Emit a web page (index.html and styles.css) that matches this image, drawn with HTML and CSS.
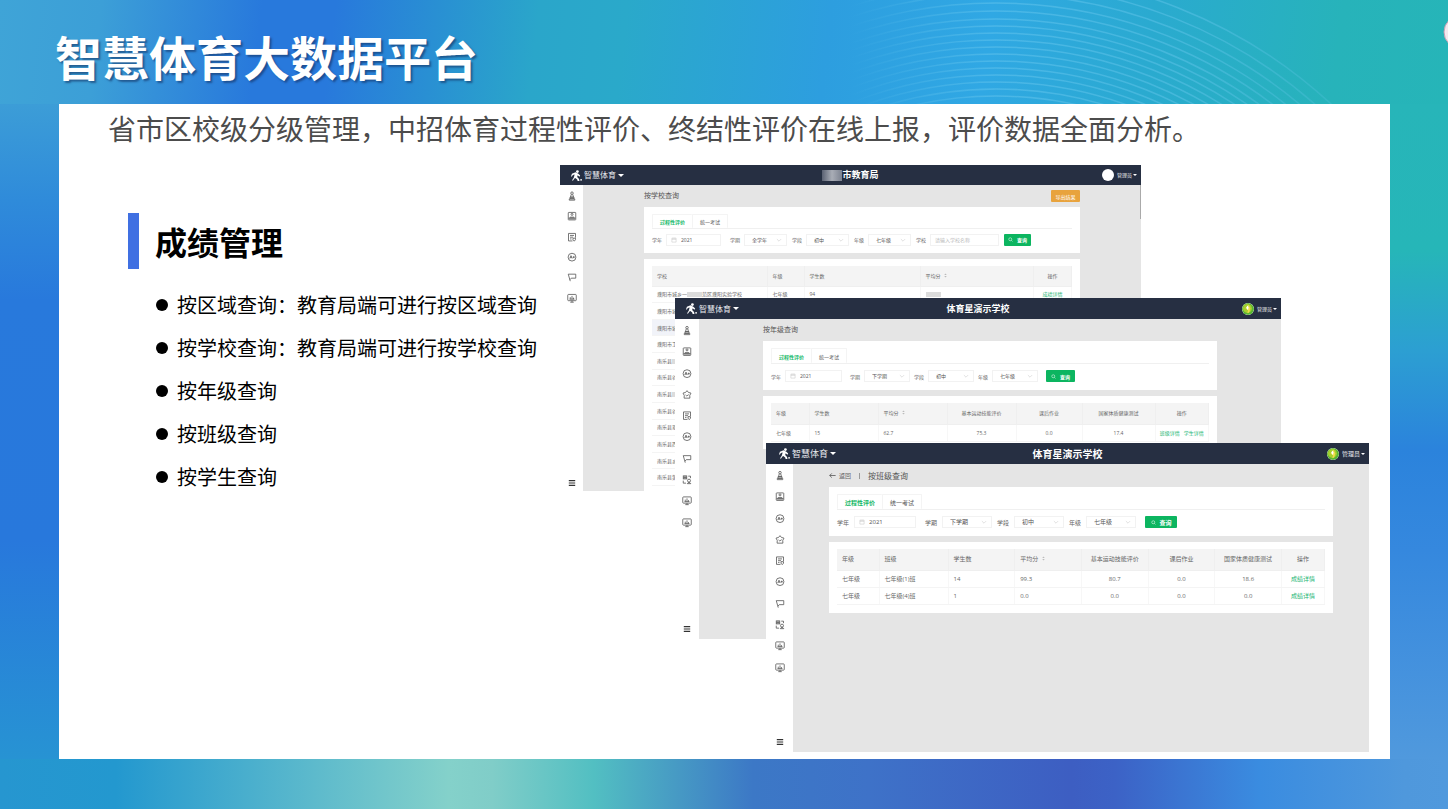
FILE: index.html
```html
<!DOCTYPE html>
<html lang="zh-CN">
<head>
<meta charset="utf-8">
<title>智慧体育大数据平台</title>
<link rel="stylesheet" href="styles.css">
</head>
<body>
<svg class="sprite" aria-hidden="true">
  <symbol id="runner" viewBox="0 0 24 24"><circle cx="14" cy="3.500" r="3"/><path d="M2 8l8-3 6 3 4 4-1.500 2.500-4-3-1 4 4 4 1 4.500h-4l-1-3.500-4-3-2 1-3 4.500H2l4-6 2-7-4 1-2 3H0z"/><circle cx="22" cy="21.500" r="2"/></symbol>
  <symbol id="pawn" viewBox="0 0 20 20"><circle cx="10" cy="4" r="2.500"/><path d="M8.500 6.500L7 12h6l-1.500-5.500M6 12h8v3H6zM4.500 15.500h11V18h-11z"/></symbol>
  <symbol id="roster" viewBox="0 0 20 20"><rect x="2.500" y="2.500" width="15" height="15" rx="1"/><circle cx="10" cy="6.500" r="2"/><path d="M6 17v-5h8v5M10 12v5M3 14h14"/></symbol>
  <symbol id="note" viewBox="0 0 20 20"><path d="M17 11V2.500H3v15h8M6 6.500h8M6 10h6M6 13.500h3M12 12h5v3l-2.500 3-2.500-3z"/></symbol>
  <symbol id="grade" viewBox="0 0 20 20"><circle cx="10" cy="10" r="7.800"/><path d="M5.500 12.500L8 7l2.500 5.500M6.500 11h3M11.500 10h4M13.500 8v4"/></symbol>
  <symbol id="star" viewBox="0 0 20 20"><path d="M10 2l2.800 3.500 5.200 1.500-2.500 4.500.3 5.500H4.200l.3-5.500L2 7l5.200-1.500zM7 10.500l2.500 2 4-2.500"/></symbol>
  <symbol id="flag" viewBox="0 0 20 20"><path d="M6.500 18L2.500 4h15v8H8.500l-2.500 3"/></symbol>
  <symbol id="swap" viewBox="0 0 20 20"><rect x="2.500" y="2.500" width="7" height="6"/><path d="M2.500 5.500h7M6 2.500v6M12.500 3H17v4M2.500 12v5H8"/><circle cx="14" cy="12" r="3"/><path d="M10.500 18c1-3 6-3 7 0z"/></symbol>
  <symbol id="board" viewBox="0 0 20 20"><rect x="1.500" y="2.500" width="17" height="12.500" rx="1.500"/><path d="M6.500 12V8M10 12V5.500M13 12V9M5 12h10M10 15v3M6.500 18h7"/></symbol>
  <symbol id="menu" viewBox="0 0 20 20"><path d="M2 4h16M2 10h16M2 16h16"/></symbol>
  <symbol id="cal" viewBox="0 0 20 20"><path d="M3 4h14v13H3zM3 8h14M7 2v4M13 2v4"/></symbol>
  <symbol id="down" viewBox="0 0 20 20"><path d="M3 7l7 7 7-7"/></symbol>
  <symbol id="search" viewBox="0 0 20 20"><circle cx="9" cy="9" r="6"/><path d="M13.500 13.500L18 18"/></symbol>
  <symbol id="back" viewBox="0 0 20 20"><path d="M19 10H2M8 4l-6 6 6 6"/></symbol>
  <symbol id="sort" viewBox="0 0 12 20"><path d="M6 2l5 6H1zM6 18l5-6H1z"/></symbol>
  <symbol id="leaf" viewBox="0 0 20 20"><circle cx="10" cy="10" r="10" fill="#58b531"/><circle cx="9" cy="9" r="7.500" fill="#a5cf2e"/><path d="M11 3l3 6-2 7-3 1 1-5-4-3z" fill="#f0dc4a"/><path d="M9 4l2 3-1 5-3-4z" fill="#fff"/></symbol>
</svg>

<svg class="backdrop" viewBox="0 0 1448 809" preserveAspectRatio="none" aria-hidden="true">
  <defs>
    <clipPath id="topband"><rect width="1448" height="104"/></clipPath>
    <linearGradient id="fade" gradientUnits="userSpaceOnUse" x1="850" y1="0" x2="1330" y2="0">
      <stop offset="0" stop-color="#6cc9ee" stop-opacity="0"/><stop offset=".3" stop-color="#6cc9ee" stop-opacity=".45"/><stop offset=".7" stop-color="#6cc9ee" stop-opacity=".4"/><stop offset="1" stop-color="#6cc9ee" stop-opacity=".2"/>
    </linearGradient>
  </defs>
  <g fill="none" stroke="url(#fade)" stroke-width="1.500" clip-path="url(#topband)">
    <circle cx="996" cy="467" r="494"/><circle cx="996" cy="467" r="483"/><circle cx="996" cy="467" r="473"/>
    <circle cx="996" cy="467" r="464"/><circle cx="996" cy="467" r="456"/><circle cx="996" cy="467" r="448"/>
    <circle cx="996" cy="467" r="441"/><circle cx="996" cy="467" r="434"/><circle cx="996" cy="467" r="427"/>
    <circle cx="996" cy="467" r="420"/><circle cx="996" cy="467" r="413"/><circle cx="996" cy="467" r="406"/>
    <circle cx="996" cy="467" r="399"/><circle cx="996" cy="467" r="392"/><circle cx="996" cy="467" r="385"/>
    <circle cx="996" cy="467" r="378"/><circle cx="996" cy="467" r="371"/>
  </g>
  <circle cx="1460" cy="32" r="16" fill="#f3e9ee" stroke="#c9a0b4"/>
</svg>

<div class="slide">
  <h1>智慧体育大数据平台</h1>
  <main class="panel">
    <p class="lead">省市区校级分级管理，中招体育过程性评价、终结性评价在线上报，评价数据全面分析。</p>
    <div class="columns">
      <section class="summary">
        <h2>成绩管理</h2>
        <ul>
          <li>按区域查询：教育局端可进行按区域查询</li>
          <li>按学校查询：教育局端可进行按学校查询</li>
          <li>按年级查询</li>
          <li>按班级查询</li>
          <li>按学生查询</li>
        </ul>
      </section>

      <div class="desktop">
        <article class="win win-school">
          <header class="bar">
            <span class="brand"><svg class="logo"><use href="#runner"/></svg>智慧体育<i class="caret"></i></span>
            <strong><span class="mosaic"></span>市教育局</strong>
            <span class="user"><span class="avatar"></span>管理员<i class="caret"></i></span>
          </header>
          <nav class="side">
            <div class="icons"><svg><use href="#pawn"/></svg><svg><use href="#roster"/></svg><svg><use href="#note"/></svg><svg><use href="#grade"/></svg><svg><use href="#flag"/></svg><svg><use href="#board"/></svg></div>
            <svg class="fold"><use href="#menu"/></svg>
          </nav>
          <div class="content">
            <div class="crumb"><h3>按学校查询</h3><button class="export" type="button">导出结果</button></div>
            <section class="card">
              <div class="tabs"><button class="on" type="button">过程性评价</button><button type="button">统一考试</button></div>
              <form class="filters">
                <label class="field year">学年<span class="box"><svg><use href="#cal"/></svg><input value="2021"></span></label>
                <label class="field">学期<span class="box pick"><select><option>全学年</option></select><svg><use href="#down"/></svg></span></label>
                <label class="field">学段<span class="box pick"><select><option>初中</option></select><svg><use href="#down"/></svg></span></label>
                <label class="field">年级<span class="box pick"><select><option>七年级</option></select><svg><use href="#down"/></svg></span></label>
                <label class="field name">学校<span class="box"><input placeholder="请输入学校名称"></span></label>
                <button class="query" type="button"><svg><use href="#search"/></svg>查询</button>
              </form>
            </section>
            <section class="card results">
              <table>
                <thead><tr><th>学校</th><th>年级</th><th>学生数</th><th>平均分 <svg class="sort"><use href="#sort"/></svg></th><th class="mid">操作</th></tr></thead>
                <tbody>
                  <tr><td>濮阳市城乡一<span class="smear"></span>范区濮阳实验学校</td><td>七年级</td><td>94</td><td><span class="smear"></span></td><td class="mid"><a href="#">成绩详情</a></td></tr>
                  <tr><td>濮阳市城</td><td></td><td></td><td></td><td></td></tr>
                  <tr class="hover"><td>濮阳市城</td><td></td><td></td><td></td><td></td></tr>
                  <tr><td>濮阳市卫</td><td></td><td></td><td></td><td></td></tr>
                  <tr><td>南乐县<span class="smear"></span></td><td></td><td></td><td></td><td></td></tr>
                  <tr><td>南乐县谷</td><td></td><td></td><td></td><td></td></tr>
                  <tr><td>南乐县<span class="smear"></span></td><td></td><td></td><td></td><td></td></tr>
                  <tr><td>南乐县谷</td><td></td><td></td><td></td><td></td></tr>
                  <tr><td>南乐县翠</td><td></td><td></td><td></td><td></td></tr>
                  <tr><td>南乐县西</td><td></td><td></td><td></td><td></td></tr>
                  <tr><td>南乐县乡</td><td></td><td></td><td></td><td></td></tr>
                  <tr><td>南乐县第</td><td></td><td></td><td></td><td></td></tr>
                </tbody>
              </table>
            </section>
          </div>
          <span class="scroll"></span>
        </article>

        <article class="win win-year">
          <header class="bar">
            <span class="brand"><svg class="logo"><use href="#runner"/></svg>智慧体育<i class="caret"></i></span>
            <strong>体育星演示学校</strong>
            <span class="user"><svg class="avatar"><use href="#leaf"/></svg>管理员<i class="caret"></i></span>
          </header>
          <nav class="side">
            <div class="icons"><svg><use href="#pawn"/></svg><svg><use href="#roster"/></svg><svg><use href="#grade"/></svg><svg><use href="#star"/></svg><svg><use href="#note"/></svg><svg><use href="#grade"/></svg><svg><use href="#flag"/></svg><svg><use href="#swap"/></svg><svg><use href="#board"/></svg><svg><use href="#board"/></svg></div>
            <svg class="fold"><use href="#menu"/></svg>
          </nav>
          <div class="content">
            <div class="crumb"><h3>按年级查询</h3></div>
            <section class="card">
              <div class="tabs"><button class="on" type="button">过程性评价</button><button type="button">统一考试</button></div>
              <form class="filters">
                <label class="field year">学年<span class="box"><svg><use href="#cal"/></svg><input value="2021"></span></label>
                <label class="field">学期<span class="box pick"><select><option>下学期</option></select><svg><use href="#down"/></svg></span></label>
                <label class="field">学段<span class="box pick"><select><option>初中</option></select><svg><use href="#down"/></svg></span></label>
                <label class="field">年级<span class="box pick"><select><option>七年级</option></select><svg><use href="#down"/></svg></span></label>
                <button class="query" type="button"><svg><use href="#search"/></svg>查询</button>
              </form>
            </section>
            <section class="card results">
              <table>
                <thead><tr><th>年级</th><th>学生数</th><th>平均分 <svg class="sort"><use href="#sort"/></svg></th><th class="mid">基本运动技能评价</th><th class="mid">课后作业</th><th class="mid">国家体质健康测试</th><th class="mid">操作</th></tr></thead>
                <tbody>
                  <tr><td>七年级</td><td>15</td><td>62.7</td><td class="mid">75.3</td><td class="mid">0.0</td><td class="mid">17.4</td><td class="mid links"><a href="#">班级详情</a><a href="#">学生详情</a></td></tr>
                </tbody>
              </table>
            </section>
          </div>
        </article>

        <article class="win win-class">
          <header class="bar">
            <span class="brand"><svg class="logo"><use href="#runner"/></svg>智慧体育<i class="caret"></i></span>
            <strong>体育星演示学校</strong>
            <span class="user"><svg class="avatar"><use href="#leaf"/></svg>管理员<i class="caret"></i></span>
          </header>
          <nav class="side">
            <div class="icons"><svg><use href="#pawn"/></svg><svg><use href="#roster"/></svg><svg><use href="#grade"/></svg><svg><use href="#star"/></svg><svg><use href="#note"/></svg><svg><use href="#grade"/></svg><svg><use href="#flag"/></svg><svg><use href="#swap"/></svg><svg><use href="#board"/></svg><svg><use href="#board"/></svg></div>
            <svg class="fold"><use href="#menu"/></svg>
          </nav>
          <div class="content">
            <div class="crumb"><a class="back" href="#"><svg><use href="#back"/></svg>返回</a><span class="rule"></span><h3>按班级查询</h3></div>
            <section class="card">
              <div class="tabs"><button class="on" type="button">过程性评价</button><button type="button">统一考试</button></div>
              <form class="filters">
                <label class="field year">学年<span class="box"><svg><use href="#cal"/></svg><input value="2021"></span></label>
                <label class="field">学期<span class="box pick"><select><option>下学期</option></select><svg><use href="#down"/></svg></span></label>
                <label class="field">学段<span class="box pick"><select><option>初中</option></select><svg><use href="#down"/></svg></span></label>
                <label class="field">年级<span class="box pick"><select><option>七年级</option></select><svg><use href="#down"/></svg></span></label>
                <button class="query" type="button"><svg><use href="#search"/></svg>查询</button>
              </form>
            </section>
            <section class="card results">
              <table>
                <thead><tr><th>年级</th><th>班级</th><th>学生数</th><th>平均分 <svg class="sort"><use href="#sort"/></svg></th><th class="mid">基本运动技能评价</th><th class="mid">课后作业</th><th class="mid">国家体质健康测试</th><th class="mid">操作</th></tr></thead>
                <tbody>
                  <tr><td>七年级</td><td>七年级(1)班</td><td>14</td><td>99.3</td><td class="mid">80.7</td><td class="mid">0.0</td><td class="mid">18.6</td><td class="mid"><a href="#">成绩详情</a></td></tr>
                  <tr><td>七年级</td><td>七年级(4)班</td><td>1</td><td>0.0</td><td class="mid">0.0</td><td class="mid">0.0</td><td class="mid">0.0</td><td class="mid"><a href="#">成绩详情</a></td></tr>
                </tbody>
              </table>
            </section>
          </div>
        </article>
      </div>
    </div>
  </main>
</div>
</body>
</html>
```
FILE: styles.css
```css
* { box-sizing: border-box; }

body {
  margin: 0;
  min-height: 100vh;
  font-family: "Noto Sans CJK SC", sans-serif;
  color: #000;
  background:
    linear-gradient(90deg, #2696d0 0, #2398cf 8%, #84d1ca 31%, #80cdc8 34%, #52bfc2 41%, #3c78c6 52%, #3e72c8 60%, #3d5ec2 74%, #3c62c6 77%, #3a8ce0 87%, #4f98dc 97%, #5099dd 100%) 0 100% / 100% 50px no-repeat,
    linear-gradient(97deg, #3fa4d7 0, #3c9fd7 7%, #2879dc 18%, #2879dc 23%, #2aa6ca 37%, #2aa9ca 43%, #2d9edf 57%, #30a8e4 68%, #2aaad0 79%, #27b3ba 92%, #26b5b8 100%) 0 0 / 100% 104px no-repeat,
    linear-gradient(180deg, #3c9dd7 104px, #2f8bda 200px, #2879dc 300px, #2878dc 540px, #2793d3 759px) 0 0 / 59px 100% no-repeat,
    linear-gradient(180deg, #27b5b9 104px, #26b6b8 250px, #2c9fd2 350px, #2b83dc 450px, #3588de 550px, #5099dd 759px) 100% 0 / 58px 100% no-repeat,
    #287adc;
}

.sprite { position: absolute; width: 0; height: 0; }
.backdrop { position: absolute; inset: 0; width: 100%; height: 100%; }

.slide {
  position: relative;
  display: flex;
  flex-direction: column;
  min-height: 100vh;
  padding: 21px 58px 50px 59px;
}
h1 {
  margin: 0 0 13px;
  text-indent: -4px;
  font-size: 47px;
  line-height: 70px;
  color: #fff;
  text-shadow: 2px 2px 2px rgba(20, 50, 100, .6);
}
.panel {
  flex: 1;
  display: flex;
  flex-direction: column;
  padding: 3px 21px 7px 49px;
  background: #fff;
}
.lead { margin: 0 0 16px; font-size: 28px; line-height: 42px; color: #4c4c4c; }
.columns { flex: 1; display: flex; }
.summary { width: 452px; padding: 48px 0 0 20px; flex: none; }
h2 {
  margin: 0 0 24px;
  padding-left: 16px;
  border-left: 11px solid #4070e2;
  font-size: 32px;
  line-height: 56px;
}
ul {
  margin: 0;
  padding: 0 0 0 28px;
  list-style: none;
  display: grid;
  gap: 19px;
}
li { display: flex; align-items: center; gap: 9px; font-size: 20px; line-height: 24px; white-space: nowrap; }
li::before { content: ""; width: 12px; height: 12px; border-radius: 50%; background: #000; }

/* Overlapping windows */
.desktop { position: relative; flex: 1; min-height: 587px; }
.win {
  position: absolute;
  display: grid;
  grid-template-rows: var(--bar) 1fr;
  grid-template-columns: var(--side) 1fr;
  overflow: hidden;
  background: #e5e5e5;
  font-family: "Open Sans", "Noto Sans CJK SC", sans-serif;
  font-size: var(--fs);
  color: #666;
}
.win-school {
  left: 0; top: 0; width: 581px; height: 326px;
  --bar: 20px; --side: 23px; --fs: 5px; --brand: 8px; --title: 9px; --head: 7px;
  --gutter: 61px; --icons: 122px; --tabs: 15px; --year: 55px; --pick: 43px; --gap: 4px; --btn: 27px;
}
.win-year {
  left: 115px; top: 133px; width: 606px; height: 341px;
  --bar: 21px; --side: 24px; --fs: 5px; --brand: 8px; --title: 9px; --head: 7px;
  --gutter: 64px; --icons: 213px; --tabs: 16px; --year: 57px; --pick: 46px; --gap: 4px; --btn: 29px;
}
.win-class {
  left: 206px; top: 278px; width: 603px; height: 309px;
  --bar: 21px; --side: 27px; --fs: 6px; --brand: 9px; --title: 10px; --head: 8px;
  --gutter: 36px; --icons: 213px; --tabs: 16px; --year: 62px; --pick: 50px; --gap: 5px; --btn: 32px;
}
.bar {
  grid-column: 1 / -1;
  display: grid;
  grid-template-columns: 1fr auto 1fr;
  align-items: center;
  background: #262f42;
  color: #e8eaee;
}
.bar strong { display: flex; align-items: center; font-size: var(--title); color: #fff; line-height: 12px; }
.brand, .user { display: flex; align-items: center; font-size: var(--brand); line-height: 12px; }
.brand { gap: 2px; padding-left: 11px; }
.win-class .brand { padding-left: 13px; }
.user { justify-content: flex-end; gap: 3px; padding-right: 4px; font-size: var(--fs); }
.logo { width: 11px; height: 11px; fill: #fff; }
.caret { border: 3px solid transparent; border-top-color: #fff; border-bottom: 0; }
.user .caret { border-width: 2px; border-bottom: 0; margin-left: -2px; }
.avatar { width: 12px; height: 12px; border-radius: 50%; background: #fff; }
.mosaic { width: 20px; height: 11px; background: linear-gradient(90deg, #5a6172, #a9adb6 50%, #7c8290); }

.side { display: flex; flex-direction: column; align-items: center; padding-top: 1px; background: #fff; }
.icons { display: grid; grid-auto-rows: 1fr; height: var(--icons); }
.side svg { width: 10px; height: 100%; fill: none; stroke: #555; stroke-width: 1.6; }
.side .fold { width: 8px; height: 20px; margin-top: auto; stroke: #333; stroke-width: 3; }

.content { display: flex; flex-direction: column; min-width: 0; padding: 0 var(--gutter); gap: 6px; }
.crumb { display: flex; align-items: center; height: 22px; flex: none; margin-bottom: -6px; }
h3 { margin: 0; font-size: var(--head); font-weight: 400; color: #555; line-height: 12px; }
.win-class .crumb { height: 23px; }
.back { display: flex; align-items: center; gap: 3px; color: #666; text-decoration: none; }
.back svg { width: 7px; height: 7px; fill: none; stroke: #444; stroke-width: 2; }
.rule { width: 1px; height: 6px; margin: 0 8px; background: #999; }
button { border: 0; padding: 0; font: inherit; border-radius: 1px; }
.export { margin-left: auto; width: 29px; height: 12px; background: #e8a33d; color: #fff; }

.card { padding: 7px 8px; background: #fff; }
.tabs { display: flex; height: var(--tabs); border-bottom: 1px solid #f0f0f0; }
.tabs button { padding: 0 7px; border: 1px solid #f4f4f4; border-bottom: 0; background: #fff; color: #555; }
.tabs .on { color: #14b866; font-weight: 700; border-right: 0; }
.filters { display: flex; align-items: center; height: 12px; margin: 6px 0 1px; gap: var(--gap); }
.win-school .filters { height: 11px; margin: 5px 0 1px; gap: 5px; }
.field { display: flex; align-items: center; gap: var(--gap); white-space: nowrap; }
.box { position: relative; display: flex; align-items: center; gap: 4px; width: var(--pick); height: 12px; padding: 0 4px; border: 1px solid #f2f2f2; }
.year { margin-right: 4px; }
.year .box { width: var(--year); }
.name .box { width: 69px; }
.box svg { flex: none; width: 6px; height: 6px; fill: none; stroke: #bbb; stroke-width: 1.5; }
.box input, .box select { width: 100%; min-width: 0; padding: 0; border: 0; background: none; appearance: none; font: inherit; color: #555; line-height: 10px; }
.box input::placeholder { color: #bbb; }
.box select { padding-left: 3px; }
.query { display: flex; align-items: center; justify-content: center; gap: 4px; width: var(--btn); height: 12px; margin-left: 4px; background: #0cb560; color: #fff; font-weight: 700; }
.win-school .query { margin-left: 0; }
.query svg { width: 5px; height: 5px; fill: none; stroke: #fff; stroke-width: 2; }

table { width: 100%; table-layout: fixed; border-collapse: collapse; }
th, td { height: 17px; padding: 0 0 0 5px; font-weight: 400; text-align: left; line-height: 8px; white-space: nowrap; overflow: hidden; border-right: 1px solid #f7f7f7; border-bottom: 1px solid #f4f4f4; }
th { height: 21px; background: #f4f4f4; border-color: #efefef; }
.mid { padding: 0; text-align: center; }
td a { color: #22b573; text-decoration: none; }
.links a + a { margin-left: 4px; }
.sort { width: 3px; height: 5px; margin-left: 2px; fill: #bbb; }
.hover td { background: #f1f3f9; }
.smear { display: inline-block; width: 15px; height: 5px; background: #dcdcdc; vertical-align: middle; }

.win-school table { height: 220px; }
.win-school th { height: 20px; }
.win-school td { height: auto; }
.win-school .results { flex: 1; }
.win-school th:nth-child(1) { width: 115px; }
.win-school th:nth-child(2) { width: 37px; }
.win-school th:nth-child(3) { width: 116px; }
.win-school th:nth-child(5) { width: 38px; }
.win-year th:nth-child(1) { width: 38px; }
.win-year th:nth-child(2), .win-year th:nth-child(3), .win-year th:nth-child(4) { width: 69px; }
.win-year th:nth-child(5) { width: 66px; }
.win-year th:nth-child(6) { width: 73px; }
.win-class th:nth-child(1) { width: 42px; }
.win-class th:nth-child(2) { width: 69px; }
.win-class th:nth-child(8) { width: 43px; }
.win-class .results { padding-bottom: 8px; }
.scroll { position: absolute; right: 0; top: 20px; width: 1px; height: 34px; background: #aaa; }
```
